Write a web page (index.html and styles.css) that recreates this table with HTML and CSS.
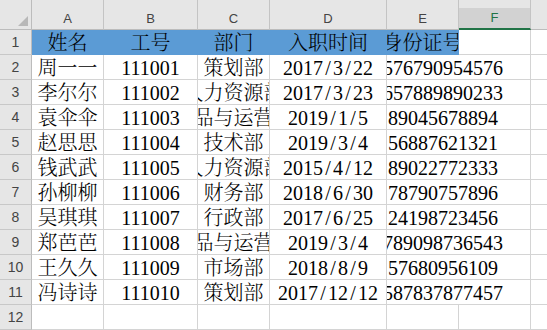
FILE: index.html
```html
<!DOCTYPE html>
<html lang="zh">
<head>
<meta charset="utf-8">
<title>Sheet</title>
<link rel="stylesheet" href="styles.css">
</head>
<body>
<div class="sheet">
  <div class="corner"><svg width="10" height="10" viewBox="0 0 10 10"><polygon points="10,0 10,10 0,10" fill="#b8b8b8"/></svg></div>
  <div class="ch"><span>A</span></div>
  <div class="ch"><span>B</span></div>
  <div class="ch"><span>C</span></div>
  <div class="ch"><span>D</span></div>
  <div class="ch"><span>E</span></div>
  <div class="ch sel"><span>F</span></div>
  <div class="ch"><span></span></div>

  <div class="rh">1</div>
  <div class="c hd"><span>姓名</span></div>
  <div class="c hd"><span>工号</span></div>
  <div class="c hd"><span>部门</span></div>
  <div class="c hd"><span>入职时间</span></div>
  <div class="c hd"><span>身份证号</span></div>
  <div class="c"></div>
  <div class="c"></div>

  <div class="rh">2</div>
  <div class="c"><span>周一一</span></div>
  <div class="c"><span>111001</span></div>
  <div class="c"><span>策划部</span></div>
  <div class="c"><span>2017<i class="sl">/</i>3<i class="sl">/</i>22</span></div>
  <div class="c id long"><span>576790954576</span></div>
  <div class="c"></div>

  <div class="rh">3</div>
  <div class="c"><span>李尔尔</span></div>
  <div class="c"><span>111002</span></div>
  <div class="c"><span>人力资源部</span></div>
  <div class="c"><span>2017<i class="sl">/</i>3<i class="sl">/</i>23</span></div>
  <div class="c id long"><span>657889890233</span></div>
  <div class="c"></div>

  <div class="rh">4</div>
  <div class="c"><span>袁伞伞</span></div>
  <div class="c"><span>111003</span></div>
  <div class="c"><span>产品与运营部</span></div>
  <div class="c"><span>2019<i class="sl">/</i>1<i class="sl">/</i>5</span></div>
  <div class="c id"><span>89045678894</span></div>
  <div class="c"></div>

  <div class="rh">5</div>
  <div class="c"><span>赵思思</span></div>
  <div class="c"><span>111004</span></div>
  <div class="c"><span>技术部</span></div>
  <div class="c"><span>2019<i class="sl">/</i>3<i class="sl">/</i>4</span></div>
  <div class="c id"><span>56887621321</span></div>
  <div class="c"></div>

  <div class="rh">6</div>
  <div class="c"><span>钱武武</span></div>
  <div class="c"><span>111005</span></div>
  <div class="c"><span>人力资源部</span></div>
  <div class="c"><span>2015<i class="sl">/</i>4<i class="sl">/</i>12</span></div>
  <div class="c id"><span>89022772333</span></div>
  <div class="c"></div>

  <div class="rh">7</div>
  <div class="c"><span>孙柳柳</span></div>
  <div class="c"><span>111006</span></div>
  <div class="c"><span>财务部</span></div>
  <div class="c"><span>2018<i class="sl">/</i>6<i class="sl">/</i>30</span></div>
  <div class="c id"><span>78790757896</span></div>
  <div class="c"></div>

  <div class="rh">8</div>
  <div class="c"><span>吴琪琪</span></div>
  <div class="c"><span>111007</span></div>
  <div class="c"><span>行政部</span></div>
  <div class="c"><span>2017<i class="sl">/</i>6<i class="sl">/</i>25</span></div>
  <div class="c id"><span>24198723456</span></div>
  <div class="c"></div>

  <div class="rh">9</div>
  <div class="c"><span>郑芭芭</span></div>
  <div class="c"><span>111008</span></div>
  <div class="c"><span>产品与运营部</span></div>
  <div class="c"><span>2019<i class="sl">/</i>3<i class="sl">/</i>4</span></div>
  <div class="c id long"><span>789098736543</span></div>
  <div class="c"></div>

  <div class="rh">10</div>
  <div class="c"><span>王久久</span></div>
  <div class="c"><span>111009</span></div>
  <div class="c"><span>市场部</span></div>
  <div class="c"><span>2018<i class="sl">/</i>8<i class="sl">/</i>9</span></div>
  <div class="c id"><span>57680956109</span></div>
  <div class="c"></div>

  <div class="rh">11</div>
  <div class="c"><span>冯诗诗</span></div>
  <div class="c"><span>111010</span></div>
  <div class="c"><span>策划部</span></div>
  <div class="c"><span>2017<i class="sl">/</i>12<i class="sl">/</i>12</span></div>
  <div class="c id long"><span>587837877457</span></div>
  <div class="c"></div>

  <div class="rh">12</div>
  <div class="c"></div>
  <div class="c"></div>
  <div class="c"></div>
  <div class="c"></div>
  <div class="c"></div>
  <div class="c"></div>
  <div class="c"></div>
</div>
</body>
</html>
```

FILE: styles.css
```css
html, body {
  margin: 0;
  padding: 0;
  background: #ffffff;
}
body {
  width: 547px;
  height: 330px;
  overflow: hidden;
}
.sheet {
  display: grid;
  grid-template-columns: 32px 72px 94px 72px 117px 72px 72px 72px;
  grid-template-rows: 30px;
  grid-auto-rows: 25px;
  width: 603px;
}
.corner,
.ch,
.rh,
.c {
  box-sizing: border-box;
  border-right: 1px solid #d4d4d4;
  border-bottom: 1px solid #d4d4d4;
  overflow: hidden;
  white-space: nowrap;
  display: flex;
}
.corner {
  background: #e6e6e6;
  border-right-color: #bcbcbc;
  border-bottom-color: #bcbcbc;
  justify-content: flex-end;
  align-items: flex-end;
  padding: 0 3px 3px 0;
}
.corner svg {
  display: block;
}
.ch {
  background: #e6e6e6;
  border-right-color: #c4c4c4;
  border-bottom-color: #bcbcbc;
  justify-content: center;
  align-items: center;
  padding-top: 8px;
  font: 13px/16px "Liberation Sans", Arial, sans-serif;
  color: #444444;
}
.ch.sel {
  background: linear-gradient(#e6e6e6 8px, #d2d2d2 8px);
  border-bottom: 2px solid #217346;
  color: #217346;
}
.rh {
  background: #e6e6e6;
  border-right-color: #bcbcbc;
  border-bottom-color: #c8c8c8;
  justify-content: center;
  align-items: center;
  font: 14px/16px "Liberation Sans", Arial, sans-serif;
  color: #444444;
}
.c {
  justify-content: center;
  align-items: flex-end;
  padding-bottom: 1px;
  font: 300 20px/20px "Liberation Serif", "Noto Serif CJK SC", "Noto Sans CJK SC", serif;
  color: #000000;
}
.c > span {
  flex: none;
}
.c.hd {
  background: #5b9bd5;
  border-right-color: #5b9bd5;
  border-bottom-color: #5b9bd5;
}
.c.id {
  grid-column: span 2;
  justify-content: flex-end;
  padding-right: 32px;
}
.c.id.long {
  padding-right: 27px;
}
.sl {
  font-style: normal;
  display: inline-block;
  width: 0.5em;
  text-align: center;
}
```
